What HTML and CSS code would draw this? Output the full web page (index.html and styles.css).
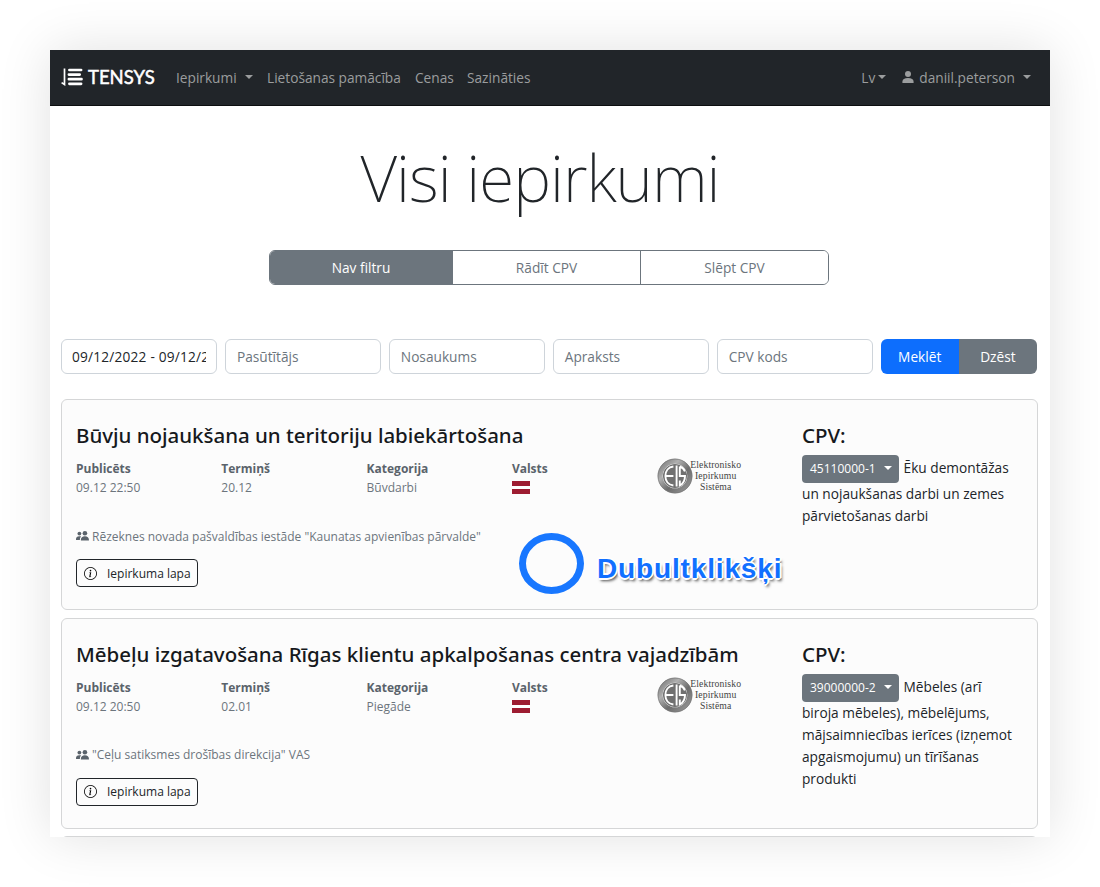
FILE: index.html
```html
<!DOCTYPE html>
<html lang="lv">
<head>
<meta charset="utf-8">
<title>Visi iepirkumi</title>
<link rel="stylesheet" href="styles.css">
</head>
<body>
<svg width="0" height="0" class="defs">
  <defs>
    <linearGradient id="metal" x1="0" y1="0" x2="1" y2="1">
      <stop offset="0" stop-color="#777"/><stop offset=".3" stop-color="#b0b0b0"/><stop offset=".6" stop-color="#6c6c6c"/><stop offset="1" stop-color="#999"/>
    </linearGradient>
    <symbol id="people" viewBox="0 0 13 10">
      <circle cx="3.400" cy="2.600" r="1.900"/><circle cx="8.900" cy="2.300" r="2.300"/>
      <path d="M0 9V8c0-1.700 1.200-2.800 3.200-2.800.8 0 1.400.1 1.900.4C4.200 6.400 3.900 7.400 3.900 9zM4.900 9.400V8.500c0-1.900 1.500-3.200 4-3.200s4 1.300 4 3.200v.9z"/>
    </symbol>
    <symbol id="info" viewBox="0 0 16 16">
      <path d="M8 15A7 7 0 1 1 8 1a7 7 0 0 1 0 14m0 1A8 8 0 1 0 8 0a8 8 0 0 0 0 16"/>
      <path d="m8.930 6.588-2.290.287-.082.380.450.083c.294.070.352.176.288.469l-.738 3.468c-.194.897.105 1.319.808 1.319.545 0 1.178-.252 1.465-.598l.088-.416c-.2.176-.492.246-.686.246-.275 0-.375-.193-.304-.533zM9 4.500a1 1 0 1 1-2 0 1 1 0 0 1 2 0"/>
    </symbol>
    <symbol id="eis" viewBox="0 0 36 36">
      <circle cx="18" cy="18" r="14.800" fill="#fff" stroke="url(#metal)" stroke-width="5"/>
      <circle cx="18" cy="18" r="17" fill="none" stroke="#777" stroke-width=".7"/>
      <circle cx="18" cy="18" r="12" fill="#707070"/>
      <path d="M16.400 8.500c-5 .6-8 4.500-8 9.500s3 8.900 8 9.500M8.500 18h7.900M19.600 7.500v21M22.800 8.500c2.600.9 4.400 2.700 5.100 5M27.700 18h-4.900V8.500M22.800 18h5.200c-.1 4.800-2 7.900-5.200 9.400v-5" fill="none" stroke="#fff" stroke-width="1.900"/>
    </symbol>
  </defs>
</svg>

<div class="page">
  <nav class="navbar">
    <a class="brand">
      <svg class="brand-mark" width="22" height="18" viewBox="0 0 22 18">
        <path d="M3.500.5v16L.6 14.600" fill="none" stroke="#fff" stroke-width="1.700"/>
        <path d="M8.400 2h11.700M7.900 6.600h10.800M7.900 11.200h12.600M8.400 15.800h11.700" stroke="#fff" stroke-width="2.700" stroke-linecap="round"/>
      </svg>
      <span class="brand-name">TENSYS</span>
    </a>
    <a class="nav-link nav-iepirkumi">Iepirkumi<i class="caret"></i></a>
    <a class="nav-link nav-guide">Lietošanas pamācība</a>
    <a class="nav-link nav-prices">Cenas</a>
    <a class="nav-link nav-contact">Sazināties</a>
    <span class="spacer"></span>
    <a class="nav-link nav-lang">Lv<i class="caret"></i></a>
    <a class="nav-link nav-user">
      <svg width="12" height="12" viewBox="0 0 12 12" fill="#9b9d9e"><circle cx="6" cy="3.100" r="3"/><path d="M.4 12v-1.300C.4 8.400 2.500 7.100 6 7.100s5.600 1.300 5.600 3.600V12z"/></svg>
      <span>daniil.peterson</span><i class="caret"></i>
    </a>
  </nav>

  <h1 class="title">Visi iepirkumi</h1>

  <div class="toggle">
    <button class="toggle-item active">Nav filtru</button>
    <button class="toggle-item">Rādīt CPV</button>
    <button class="toggle-item">Slēpt CPV</button>
  </div>

  <form class="filters">
    <div class="field filled"><span class="clip">09/12/2022 - 09/12/2022</span></div>
    <div class="field">Pasūtītājs</div>
    <div class="field">Nosaukums</div>
    <div class="field">Apraksts</div>
    <div class="field">CPV kods</div>
    <div class="actions"><button type="button" class="act search">Meklēt</button><button type="button" class="act clear">Dzēst</button></div>
  </form>

  <article class="card">
    <div class="main">
      <h2 class="name">Būvju nojaukšana un teritoriju labiekārtošana</h2>
      <div class="meta">
        <div><b>Publicēts</b><span>09.12 22:50</span></div>
        <div><b>Termiņš</b><span>20.12</span></div>
        <div><b>Kategorija</b><span>Būvdarbi</span></div>
        <div><b>Valsts</b><i class="flag"></i></div>
        <div class="eis"><svg width="36" height="36"><use href="#eis"/></svg><p>Elektronisko<br>Iepirkumu<br>Sistēma</p></div>
      </div>
      <div class="buyer"><svg width="13" height="10"><use href="#people"/></svg><span>Rēzeknes novada pašvaldības iestāde "Kaunatas apvienības pārvalde"</span></div>
      <button class="open"><svg width="13" height="13"><use href="#info"/></svg>Iepirkuma lapa</button>
    </div>
    <div class="cpv">
      <h2 class="name">CPV:</h2>
      <p class="desc"><span class="code">45110000-1<i class="caret"></i></span> Ēku demontāžas<br>un nojaukšanas darbi un zemes<br>pārvietošanas darbi</p>
    </div>
    <div class="ring"></div>
    <div class="hint">Dubultklikšķi</div>
  </article>

  <article class="card">
    <div class="main">
      <h2 class="name">Mēbeļu izgatavošana Rīgas klientu apkalpošanas centra vajadzībām</h2>
      <div class="meta">
        <div><b>Publicēts</b><span>09.12 20:50</span></div>
        <div><b>Termiņš</b><span>02.01</span></div>
        <div><b>Kategorija</b><span>Piegāde</span></div>
        <div><b>Valsts</b><i class="flag"></i></div>
        <div class="eis"><svg width="36" height="36"><use href="#eis"/></svg><p>Elektronisko<br>Iepirkumu<br>Sistēma</p></div>
      </div>
      <div class="buyer"><svg width="13" height="10"><use href="#people"/></svg><span>"Ceļu satiksmes drošības direkcija" VAS</span></div>
      <button class="open"><svg width="13" height="13"><use href="#info"/></svg>Iepirkuma lapa</button>
    </div>
    <div class="cpv">
      <h2 class="name">CPV:</h2>
      <p class="desc"><span class="code">39000000-2<i class="caret"></i></span> Mēbeles (arī<br>biroja mēbeles), mēbelējums,<br>mājsaimniecības ierīces (izņemot<br>apgaismojumu) un tīrīšanas<br>produkti</p>
    </div>
  </article>

  <article class="card"></article>
</div>
</body>
</html>
```
FILE: styles.css
```css
* { box-sizing: border-box; }
body {
  margin: 0;
  padding: 50px;
  height: 887px;
  overflow: hidden;
  background: #fff;
  font-family: "Open Sans", "Noto Sans", sans-serif;
  font-size: 13.7px;
  color: #212529;
}
h1, h2, p { margin: 0; font-weight: normal; }
button { font: inherit; padding: 0; margin: 0; }
.defs { position: absolute; }
.page {
  width: 1000px;
  height: 787px;
  overflow: hidden;
  background: #fff;
  box-shadow: 0 0 50px rgba(0, 0, 0, .12);
  display: flex;
  flex-direction: column;
}

/* Navigation */
.navbar {
  flex: none;
  height: 56px;
  padding: 0 19px 0 11px;
  background: #212529;
  border-bottom: 1px solid #0c0e10;
  display: flex;
  align-items: center;
  color: #9b9d9e;
}
.brand { display: flex; align-items: center; gap: 5px; width: 115px; color: #fff; }
.brand-mark { margin-top: -2px; }
.brand-name { margin-top: -2px; font-family: Lato, sans-serif; font-size: 18.500px; font-weight: 400; -webkit-text-stroke: .5px #fff; line-height: 20px; }
.nav-link { display: flex; align-items: center; line-height: 20px; white-space: nowrap; }
.nav-iepirkumi { width: 91px; }
.nav-guide { width: 148px; }
.nav-prices { width: 52px; }
.spacer { flex: 1; }
.nav-lang { margin-right: 16px; }
.nav-lang .caret { margin-left: 3px; }
.nav-user span { margin-left: 5px; }
.nav-user svg { margin-top: -1px; }
.caret {
  display: inline-block;
  margin-left: 8px;
  border: 4px solid transparent;
  border-top-color: currentColor;
  border-bottom: 0;
}
.nav-link .caret { margin-top: -2px; }

/* Heading and mode switch */
.title {
  margin-top: 27px;
  height: 90px;
  line-height: 90px;
  padding-right: 20px;
  text-align: center;
  font-family: "Noto Sans", "Open Sans", sans-serif;
  font-size: 64px;
  letter-spacing: -.95px;
  font-weight: 200;
}
.toggle {
  flex: none;
  width: 560px;
  height: 35px;
  margin: 27px 0 0 219px;
  display: flex;
  border: 1px solid #6c757d;
  border-radius: 6px;
  overflow: hidden;
}
.toggle-item { flex: 0 0 188px; border: 0; border-left: 1px solid #6c757d; background: #fff; color: #6c757d; }
.toggle-item.active { flex: 1; background: #6c757d; color: #fff; border-left: 0; }

/* Filters */
.filters {
  flex: none;
  margin: 54px 0 25px 11px;
  width: 976px;
  height: 35px;
  display: grid;
  grid-template-columns: repeat(6, 1fr);
  column-gap: 7.500px;
}
.field {
  border: 1px solid #ced4da;
  border-radius: 6px;
  padding: 0 11px;
  line-height: 33px;
  color: #6c757d;
  min-width: 0;
}
.filled { color: #212529; padding: 0 10px; }
.clip { display: block; overflow: hidden; white-space: nowrap; letter-spacing: .2px; }
.actions { display: flex; border-radius: 6px; overflow: hidden; }
.act { flex: 1; border: 0; color: #fff; }
.search { background: #0d6efd; }
.clear { background: #6c757d; }

/* Procurement cards */
.card {
  position: relative;
  flex: none;
  width: 977px;
  height: 211px;
  margin: 0 0 7.700px 11px;
  padding: 21px 14px;
  border: 1px solid #d5d6d7;
  border-radius: 6px;
  background: #fcfcfc;
  display: flex;
}
.main { width: 726px; }
.name { font-family: "Noto Sans", sans-serif; font-size: 20.500px; letter-spacing: -.02px; line-height: 28px; height: 28px; font-weight: 500; white-space: nowrap; color: #16191c; }
.meta { display: grid; grid-template-columns: repeat(5, 145.300px); height: 57px; margin-top: 10px; color: #6c757d; font-size: 12px; line-height: 19px; }
.meta b, .meta span { display: block; }
.meta b { color: #5a636b; }
.flag { display: block; width: 18px; height: 13px; margin-top: 3px; background: linear-gradient(#9d1c31 0 5px, #fff 5px 8px, #9d1c31 8px); }
.eis { display: flex; align-items: flex-start; }
.eis svg { flex: none; margin-top: -1px; }
.eis p { margin: 0 0 0 -3px; font-family: "Liberation Serif", serif; font-size: 9.700px; letter-spacing: .12px; line-height: 11px; color: #444; text-align: center; white-space: nowrap; }
.buyer { display: flex; align-items: center; gap: 3px; height: 20px; margin-top: 10px; color: #6c757d; fill: #5a636b; font-size: 12px; white-space: nowrap; }
.open {
  display: flex;
  align-items: center;
  gap: 10px;
  width: 122px;
  height: 28px;
  margin-top: 13px;
  padding-left: 7px;
  border: 1px solid #212529;
  border-radius: 4px;
  background: transparent;
  color: #212529;
  font-size: 12px;
  white-space: nowrap;
}
.cpv { flex: 1; }
.desc { margin-top: 6px; line-height: 22px; white-space: nowrap; }
.code {
  display: inline-flex;
  align-items: center;
  width: 97px;
  height: 28px;
  margin-right: 1px;
  padding-left: 8px;
  border-radius: 4px;
  background: #6c757d;
  color: #fff;
  font-size: 12px;
}
.code .caret { margin-left: 8px; margin-top: -2px; }

/* Double-click callout */
.ring { position: absolute; left: 457px; top: 133px; width: 65px; height: 61px; border: 7px solid #1877ff; border-radius: 50%; }
.hint {
  position: absolute;
  left: 535px;
  top: 151px;
  font: bold 28px/36px "Liberation Sans", sans-serif;
  letter-spacing: .85px;
  color: #1170ff;
  text-shadow: -2px 0 #fff, 2px 0 #fff, 0 -2px #fff, 0 2px #fff, 1px 1px #fff, -1px -1px #fff, 2px 3px 3px rgba(0, 0, 0, .7);
}
```
